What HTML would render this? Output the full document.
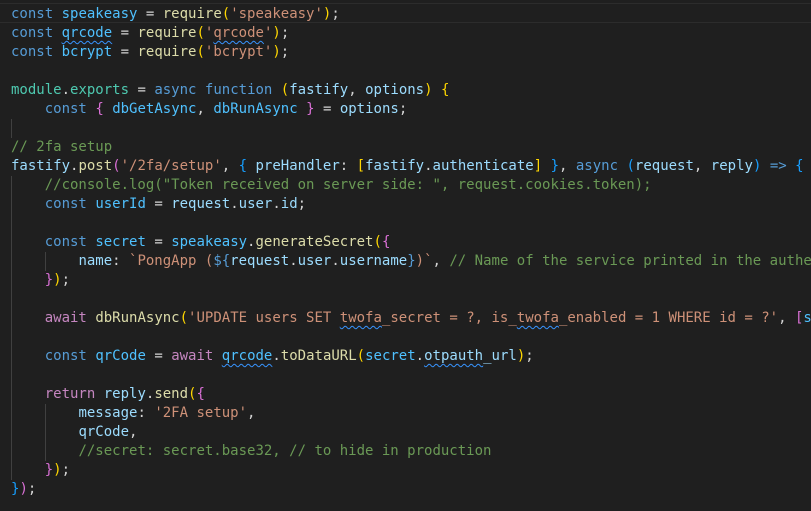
<!DOCTYPE html>
<html><head><meta charset="utf-8"><style>
html,body{margin:0;padding:0;background:#1f1f1f;width:811px;height:511px;overflow:hidden}
.ed{position:relative;font-family:"DejaVu Sans Mono","Liberation Mono",monospace;font-size:14px;line-height:19px;color:#d4d4d4;padding-top:5px}
.l{height:19px;padding-left:11px;white-space:pre}
.cur{position:absolute;left:0;top:3px;width:811px;height:18px;border-top:1px solid #2c2c2c;border-bottom:1px solid #2c2c2c}
.g{position:absolute;width:1px;background:#404040}
.k{color:#569cd6}.c{color:#4fc1ff}.v{color:#9cdcfe}.f{color:#dcdcaa}.s{color:#ce9178}.cm{color:#6a9955}
.t{color:#4ec9b0}.p{color:#c586c0}.b1{color:#ffd700}.b2{color:#da70d6}.b3{color:#179fff}
.w{text-decoration:underline wavy #3794ff;text-decoration-thickness:1px;text-underline-offset:3px}
</style></head><body><div class="ed">
<div class="cur"></div>
<div class="g" style="left:11px;top:119px;height:19px"></div>
<div class="g" style="left:11px;top:176px;height:304px"></div>
<div class="g" style="left:45px;top:252px;height:19px"></div>
<div class="g" style="left:45px;top:404px;height:57px"></div>
<div class="l"><span class="k">const</span> <span class="c">speakeasy</span> = <span class="f">require</span><span class="b1">(</span><span class="s">'speakeasy'</span><span class="b1">)</span>;</div>
<div class="l"><span class="k">const</span> <span class="c w">qrcode</span> = <span class="f">require</span><span class="b1">(</span><span class="s">'<span class="w">qrcode</span>'</span><span class="b1">)</span>;</div>
<div class="l"><span class="k">const</span> <span class="c">bcrypt</span> = <span class="f">require</span><span class="b1">(</span><span class="s">'bcrypt'</span><span class="b1">)</span>;</div>
<div class="l"> </div>
<div class="l"><span class="t">module</span>.<span class="t">exports</span> = <span class="k">async</span> <span class="k">function</span> <span class="b1">(</span><span class="v">fastify</span>, <span class="v">options</span><span class="b1">)</span> <span class="b1">{</span></div>
<div class="l">    <span class="k">const</span> <span class="b2">{</span> <span class="c">dbGetAsync</span>, <span class="c">dbRunAsync</span> <span class="b2">}</span> = <span class="v">options</span>;</div>
<div class="l"> </div>
<div class="l"><span class="cm">// 2fa setup</span></div>
<div class="l"><span class="v">fastify</span>.<span class="f">post</span><span class="b2">(</span><span class="s">'/2fa/setup'</span>, <span class="b3">{</span> <span class="v">preHandler</span>: <span class="b1">[</span><span class="v">fastify</span>.<span class="v">authenticate</span><span class="b1">]</span> <span class="b3">}</span>, <span class="k">async</span> <span class="b3">(</span><span class="v">request</span>, <span class="v">reply</span><span class="b3">)</span> <span class="k">=&gt;</span> <span class="b3">{</span></div>
<div class="l">    <span class="cm">//console.log("Token received on server side: ", request.cookies.token);</span></div>
<div class="l">    <span class="k">const</span> <span class="c">userId</span> = <span class="v">request</span>.<span class="v">user</span>.<span class="v">id</span>;</div>
<div class="l"> </div>
<div class="l">    <span class="k">const</span> <span class="c">secret</span> = <span class="c">speakeasy</span>.<span class="f">generateSecret</span><span class="b1">(</span><span class="b2">{</span></div>
<div class="l">        <span class="v">name</span>: <span class="s">`PongApp (</span><span class="k">${</span><span class="v">request</span>.<span class="v">user</span>.<span class="v">username</span><span class="k">}</span><span class="s">)`</span>, <span class="cm">// Name of the service printed in the authe</span></div>
<div class="l">    <span class="b2">}</span><span class="b1">)</span>;</div>
<div class="l"> </div>
<div class="l">    <span class="p">await</span> <span class="f">dbRunAsync</span><span class="b1">(</span><span class="s">'UPDATE users SET <span class="w">twofa</span>_secret = ?, is_<span class="w">twofa</span>_enabled = 1 WHERE id = ?'</span>, <span class="b2">[</span><span class="c">s</span></div>
<div class="l"> </div>
<div class="l">    <span class="k">const</span> <span class="c">qrCode</span> = <span class="p">await</span> <span class="c w">qrcode</span>.<span class="f">toDataURL</span><span class="b1">(</span><span class="c">secret</span>.<span class="v w">otpauth</span><span class="v">_url</span><span class="b1">)</span>;</div>
<div class="l"> </div>
<div class="l">    <span class="p">return</span> <span class="v">reply</span>.<span class="f">send</span><span class="b1">(</span><span class="b2">{</span></div>
<div class="l">        <span class="v">message</span>: <span class="s">'2FA setup'</span>,</div>
<div class="l">        <span class="v">qrCode</span>,</div>
<div class="l">        <span class="cm">//secret: secret.base32, // to hide in production</span></div>
<div class="l">    <span class="b2">}</span><span class="b1">)</span>;</div>
<div class="l"><span class="b3">}</span><span class="b2">)</span>;</div>
</div></body></html>
